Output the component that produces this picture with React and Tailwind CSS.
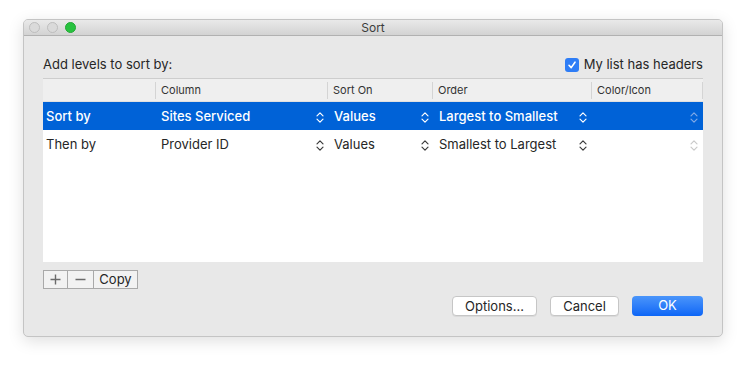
const font = { fontFamily: "Inter, 'Liberation Sans', sans-serif" };

const Chevrons = ({ color }) => (
  <svg width="8" height="13" viewBox="0 0 8 13" fill="none" stroke={color} strokeWidth="1.2" strokeLinecap="round" strokeLinejoin="round">
    <path d="M1 4.8 L4 1.8 L7 4.8" />
    <path d="M1 8.2 L4 11.2 L7 8.2" />
  </svg>
);

const rows = [
  { label: "Sort by", column: "Sites Serviced", on: "Values", order: "Largest to Smallest", selected: true },
  { label: "Then by", column: "Provider ID", on: "Values", order: "Smallest to Largest", selected: false },
];

const Row = ({ row }) => {
  const sel = row.selected;
  const text = sel ? "text-white font-medium" : "text-[#262626]";
  const chev = sel ? "#ffffff" : "#3a3a3a";
  const faint = sel ? "#7fa9e6" : "#c9c9c9";
  return (
    <div className={`flex h-[28px] pt-[2px] items-center text-[13px] ${sel ? "bg-[#0062d7]" : "bg-white"} ${text}`}>
      <div className="w-[112px] pl-[3px]">{row.label}</div>
      <div className="w-[172px] flex items-center justify-between pl-[6px] pr-[3px]">
        <span>{row.column}</span>
        <Chevrons color={chev} />
      </div>
      <div className="w-[105px] flex items-center justify-between pl-[7px] pr-[3px]">
        <span>{row.on}</span>
        <Chevrons color={chev} />
      </div>
      <div className="w-[159px] flex items-center justify-between pl-[7px] pr-[4px]">
        <span>{row.order}</span>
        <Chevrons color={chev} />
      </div>
      <div className="flex-1 flex items-center justify-end pr-[5px]">
        <Chevrons color={faint} />
      </div>
    </div>
  );
};

export default function App() {
  return (
    <div className="w-[746px] h-[365px] bg-white pt-[19px] pl-[23px]" style={font}>
      <div className="w-[700px] h-[318px] rounded-[5px] bg-[#e8e8e8] border border-[#c4c4c4] shadow-[0_4px_16px_rgba(0,0,0,0.13)] overflow-hidden flex flex-col">
        {/* Title bar */}
        <div className="h-[16px] shrink-0 bg-gradient-to-b from-[#e9e9e9] to-[#d3d3d3] border-b border-[#b1b1b1] relative flex items-center pl-[5px] gap-[7px]">
          <span className="w-[11px] h-[11px] rounded-full bg-[#dadada] border border-[#bdbdbd]" />
          <span className="w-[11px] h-[11px] rounded-full bg-[#dadada] border border-[#bdbdbd]" />
          <span className="w-[11px] h-[11px] rounded-full bg-[#28c23f] border border-[#21a834]" />
          <span className="absolute inset-0 flex items-center justify-center text-[12px] text-[#3c3c3c]">Sort</span>
        </div>

        <div className="flex-1 px-[19px] pt-[19px] flex flex-col">
          <div className="h-[20px] flex items-center justify-between text-[13px] text-[#262626]">
            <span>Add levels to sort by:</span>
            <label className="flex items-center gap-[5px]">
              <span className="w-[14px] h-[14px] rounded-[3px] bg-[#2e7df6] flex items-center justify-center">
                <svg width="10" height="10" viewBox="0 0 10 10" fill="none" stroke="white" strokeWidth="1.6" strokeLinecap="round" strokeLinejoin="round">
                  <path d="M2 5.3 L4.2 7.6 L8 2.2" />
                </svg>
              </span>
              <span>My list has headers</span>
            </label>
          </div>

          {/* Table */}
          <div className="mt-[3px] h-[184px] border-t border-[#cdcdcd] bg-white flex flex-col">
            <div className="h-[23px] bg-[#efefef] flex items-center text-[11px] text-[#333] border-b border-[#e0e0e0]">
              <div className="w-[112px] h-full" />
              <div className="w-[172px] h-[17px] border-l border-[#d4d4d4] pl-[5px] flex items-center">Column</div>
              <div className="w-[105px] h-[17px] border-l border-[#d4d4d4] pl-[5px] flex items-center">Sort On</div>
              <div className="w-[159px] h-[17px] border-l border-[#d4d4d4] pl-[5px] flex items-center">Order</div>
              <div className="flex-1 h-[17px] border-l border-r border-[#d4d4d4] pl-[5px] flex items-center">Color/Icon</div>
            </div>
            {rows.map((r) => (
              <Row key={r.label} row={r} />
            ))}
          </div>

          <div className="mt-[8px] flex h-[19px] w-[95px] border border-[#a9a9a9] bg-[#f2f2f2] text-[#555]">
            <div className="w-[24px] flex items-center justify-center border-r border-[#a9a9a9]">
              <svg width="11" height="11" viewBox="0 0 11 11" stroke="#6b6b6b" strokeWidth="1.4">
                <path d="M5.5 0.5 V10.5 M0.5 5.5 H10.5" />
              </svg>
            </div>
            <div className="w-[26px] flex items-center justify-center border-r border-[#a9a9a9]">
              <svg width="11" height="11" viewBox="0 0 11 11" stroke="#6b6b6b" strokeWidth="1.4">
                <path d="M0.5 5.5 H10.5" />
              </svg>
            </div>
            <div className="flex-1 flex items-center justify-center text-[13px] text-[#262626]">Copy</div>
          </div>

          <div className="mt-[7px] flex justify-end gap-[13px] text-[13px]">
            <button className="w-[85px] h-[20px] rounded-[4px] bg-white border border-[#c6c6c6] shadow-[0_1px_0_rgba(0,0,0,0.06)] text-[#262626]">Options...</button>
            <button className="w-[69px] h-[20px] rounded-[4px] bg-white border border-[#c6c6c6] shadow-[0_1px_0_rgba(0,0,0,0.06)] text-[#262626]">Cancel</button>
            <button className="w-[71px] h-[20px] rounded-[4px] bg-gradient-to-b from-[#4a95fa] to-[#0a65f6] text-white">OK</button>
          </div>
        </div>
      </div>
    </div>
  );
}
